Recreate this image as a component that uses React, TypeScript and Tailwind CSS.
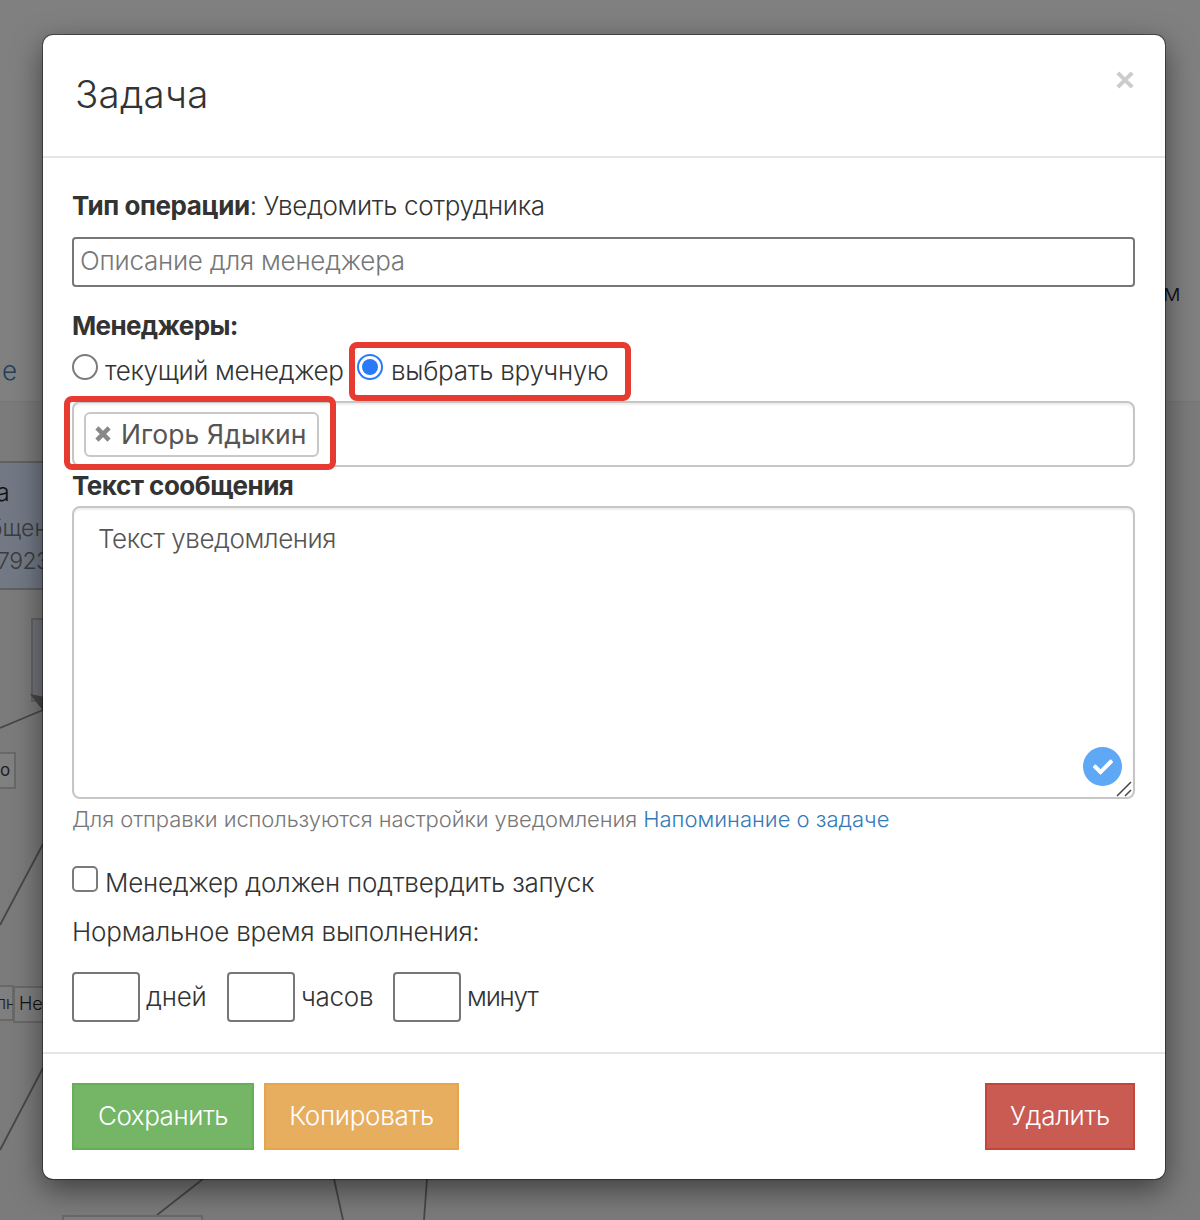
import React from 'react';
import { FaCheck } from 'react-icons/fa';

const Backdrop: React.FC = () => (
  <div className="absolute inset-0 flex flex-col overflow-hidden bg-[#808080]">
    {/* Page header, then the workflow canvas */}
    <div className="h-[401px] shrink-0" />
    <div className="grow border-t border-[#767676] bg-[#7b7b7b]" />
    <span className="absolute left-[2px] top-[356px] text-[26px] font-light leading-[30px] text-[#23405c]">е</span>
    <span className="absolute left-[1163px] top-[279px] text-[23px] font-light leading-[28px] text-[#111111]">м</span>

    <div className="absolute -left-2 top-[461px] h-[129px] w-[80px] border-2 border-[#5f6063] bg-[#727985]" />
    <span className="absolute -left-[4px] top-[478px] text-[25px] font-light leading-[28px] text-[#111111]">а</span>
    <span className="absolute -left-[11px] top-[514px] text-[23px] font-light leading-[28px] text-[#3a3c40]">бщен</span>
    <span className="absolute -left-[3px] top-[547px] text-[23px] font-light leading-[28px] tracking-[-0.5px] text-[#3a3c40]">7923</span>

    <div className="absolute left-[31px] top-[618px] h-[84px] w-[60px] border-2 border-[#636363] bg-[#74757b]" />

    <svg className="absolute inset-0" width="1200" height="1220" fill="none" stroke="#474747" strokeWidth="1.8">
      <path d="M0 728 43 710M43 844 0 925M43 1068 0 1150M203 1179 157 1215M334 1179 343 1220M427 1179 424 1220" />
      <path d="M30 694 50 698 44 712Z" fill="#474747" stroke="none" />
    </svg>

    <div className="absolute -left-2 top-[752px] h-[37px] w-[24px] border-2 border-[#686868] bg-[#808080]" />
    <span className="absolute left-0 top-[758px] text-[17px] leading-[24px] text-[#1f1f1f]">о</span>
    <div className="absolute -left-2 top-[985px] h-[36px] w-[22px] border-2 border-[#686868] bg-[#7f7f7f]" />
    <span className="absolute -left-[4px] top-[991px] w-[17px] overflow-hidden text-[18px] font-light leading-[24px] tracking-[-0.5px] text-[#222222]">лн</span>
    <div className="absolute left-[13px] top-[986px] h-[37px] w-[60px] border-2 border-[#686868] bg-[#7f7f7f]" />
    <span className="absolute left-[19px] top-[992px] text-[18px] font-light leading-[24px] text-[#111111]">Не</span>
    <div className="absolute left-[62px] top-[1215px] h-[20px] w-[141px] border-2 border-[#686868] bg-[#7f7f7f]" />
  </div>
);

const durations = [
  { label: 'дней', className: 'w-[155px] tracking-[-0.2px]' },
  { label: 'часов', className: 'w-[166px] tracking-[-0.3px]' },
  { label: 'минут', className: 'w-[160px] tracking-[-1.2px]' },
];

const TaskModal: React.FC = () => (
  <div className="relative ml-[43px] w-[1122px] rounded-[10px] bg-white text-[#333333] shadow-[0_0_0_1px_rgba(0,0,0,0.4),0_10px_30px_rgba(0,0,0,0.5)]">
    {/* Header */}
    <div className="flex h-[123px] items-start justify-between border-b-2 border-[#e5e5e5] pl-[32px] pr-[31px]">
      <h4 className="mt-[35px] text-[38.5px] font-light leading-[48px] tracking-[0.2px]">Задача</h4>
      <button className="mt-[36px] text-[#cccccc]" title="Закрыть">
        <svg width="18" height="18" viewBox="0 0 18 18" fill="none" stroke="currentColor" strokeWidth="4">
          <path d="M1.8 1.8 16.2 16.2M16.2 1.8 1.8 16.2" />
        </svg>
      </button>
    </div>

    {/* Body */}
    <div className="h-[894px] pt-[29px] pr-[30px] pl-[29px] text-[26px] font-light">
      <p className="h-10 whitespace-nowrap leading-[38px] tracking-[-0.36px]">
        <b className="font-bold tracking-[-0.42px]">Тип операции</b>: Уведомить сотрудника
      </p>
      <input
        className="mt-[10px] block h-[50px] w-full rounded-[4px] border-2 border-[#777777] px-[6px] pb-[3px] tracking-[-0.23px] placeholder:text-[#777777]"
        placeholder="Описание для менеджера"
      />
      <p className="mt-[18px] h-10 font-bold leading-[42px] tracking-[-0.65px]">Менеджеры:</p>

      <div className="mt-[5px] flex h-10 whitespace-nowrap leading-[42px]">
        <label className="flex w-[278px] tracking-[-0.38px]">
          <span className="mt-[4px] mr-[7px] size-[26px] shrink-0 rounded-full border-2 border-[#7b7b7b]" />
          <span>текущий менеджер</span>
        </label>
        <label className="relative flex pl-[7px] tracking-[-0.28px]">
          <span className="mt-[4px] mr-[8px] flex size-[26px] shrink-0 items-center justify-center rounded-full border-2 border-[#2a7af7]">
            <span className="size-4 rounded-full bg-[#2a7af7]" />
          </span>
          <span>выбрать вручную</span>
          <span className="absolute -left-[1px] -top-[8px] z-10 h-[59px] w-[282px] rounded-[8px] border-[6px] border-[#e63b31]" />
        </label>
      </div>

      <div className="relative mt-[11px] flex h-[66px] items-center rounded-[8px] border-2 border-[#c6c6c6] pl-[10px] shadow-[inset_0_2px_2px_rgba(0,0,0,0.07)]">
        <span className="flex h-[45px] w-[235px] items-center whitespace-nowrap rounded-[6px] border-2 border-[#c8c8c8] pt-[1px] pl-[9px] text-[26.5px] font-normal tracking-[0.1px] text-[#555555]">
          <svg className="mr-[10px] mb-[2px] shrink-0 text-[#888888]" width="16" height="16" viewBox="0 0 15 15" fill="none" stroke="currentColor" strokeWidth="4.2">
            <path d="M1.8 1.8 13.2 13.2M13.2 1.8 1.8 13.2" />
          </svg>
          Игорь Ядыкин
        </span>
        <span className="absolute -left-[10px] -top-[7px] h-[74px] w-[272px] rounded-[8px] border-[6px] border-[#e63b31]" />
      </div>

      <p className="h-[37px] font-bold leading-[37px] tracking-[-0.5px]">Текст сообщения</p>
      <div className="relative mt-[2px] h-[293px] rounded-[8px] border-2 border-[#c6c6c6] px-[24px] pt-[11px] leading-10 tracking-[-0.44px] text-[#555555] shadow-[inset_0_2px_2px_rgba(0,0,0,0.07)]">
        Текст уведомления
        <span className="absolute right-[11px] bottom-[11px] flex size-[39px] items-center justify-center rounded-full bg-[#5fa8f6] text-white">
          <FaCheck className="size-5" />
        </span>
        <svg className="absolute right-[1px] bottom-0" width="16" height="16" stroke="#444444" strokeWidth="1.5">
          <path d="M1 15 15 1M9 15 15 9" />
        </svg>
      </div>
      <p className="mt-[5px] h-[30px] whitespace-nowrap text-[22px] leading-[30px] text-[#777777]">
        <span className="tracking-[-0.09px]">Для отправки используются настройки уведомления </span>
        <a className="text-[#337ab7]">Напоминание о задаче</a>
      </p>

      <label className="mt-[28px] flex h-10 leading-[42px] tracking-[-0.23px]">
        <span className="mt-[4px] mr-[7px] size-[26px] shrink-0 rounded-[5px] border-2 border-[#7b7b7b]" />
        <span>Менеджер должен подтвердить запуск</span>
      </label>
      <p className="mt-[9px] h-10 leading-[42px] tracking-[-0.2px]">Нормальное время выполнения:</p>

      <div className="mt-[21px] flex">
        {durations.map(({ label, className }) => (
          <label key={label} className={`flex leading-[50px] ${className}`}>
            <input className="mr-[6px] h-[50px] w-[68px] shrink-0 rounded-[4px] border-2 border-[#777777]" />
            {label}
          </label>
        ))}
      </div>
    </div>

    {/* Footer */}
    <div className="flex h-[127px] gap-[10px] border-t-2 border-[#e5e5e5] pt-[29px] pr-[30px] pl-[29px] text-[26px] font-light leading-[60px] text-white">
      <button className="h-[67px] w-[182px] border-2 border-[#66ae58] bg-[#74b566] pb-[2px] tracking-[-0.45px]">Сохранить</button>
      <button className="h-[67px] w-[195px] border-2 border-[#e6a54d] bg-[#e7ae60] pb-[2px] tracking-[-0.3px]">Копировать</button>
      <button className="ml-auto h-[67px] w-[150px] border-2 border-[#c5453a] bg-[#c95b53] pb-[2px] tracking-[-0.3px]">Удалить</button>
    </div>
  </div>
);

const App: React.FC = () => (
  <div className="relative h-[1220px] w-[1200px] overflow-hidden pt-[35px] font-['Inter','Open_Sans',sans-serif]">
    <Backdrop />
    <TaskModal />
  </div>
);

export default App;
